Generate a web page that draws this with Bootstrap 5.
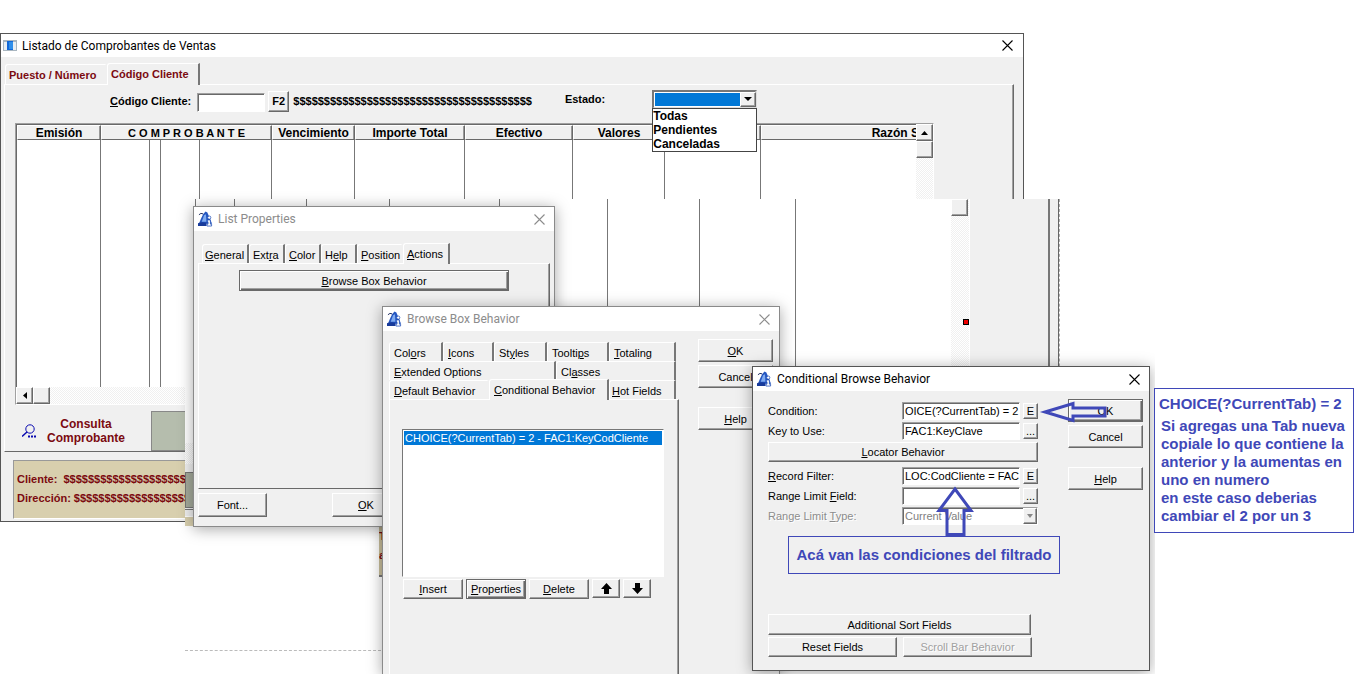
<!DOCTYPE html>
<html lang="es">
<head>
<meta charset="utf-8">
<meta name="viewport" content="width=device-width, initial-scale=1">
<title>Listado de Comprobantes de Ventas</title>
<link href="https://cdn.jsdelivr.net/npm/bootstrap@5.3.0/dist/css/bootstrap.min.css" rel="stylesheet">
<style>
:root{--face:#f0f0f0;--dark:#696969;--mid:#a0a0a0;--sel:#0078d7;--wine:#7b0a10;--ink:#3f48b8;--tan:#d8cfae}
body{font:11px/14px "Liberation Sans",Arial,sans-serif;color:#000;background:#fff}
.desk{position:relative;min-height:685px;overflow:hidden}
.win{position:absolute;background:var(--face);border:1px solid #8a8a8a}
.win-on{border-color:#555}
.win-shadow{box-shadow:0 2px 14px rgba(0,0,0,.35)}
.win-main{left:0;top:33px;width:1024px;height:489px;font-weight:700}
.win-list{left:193px;top:206px;width:362px;height:321px}
.win-box{left:382px;top:306px;width:398px;height:368px;border-bottom:0;clip-path:inset(-20px -20px 0 -20px)}
.win-cond{left:752px;top:366px;width:398px;height:305px;clip-path:inset(-20px -5px -3px -20px)}
.titlebar{display:flex;align-items:center;height:24px;background:#fff;padding:0 9px 0 4px;gap:5px;font:12px/16px Roboto,"Open Sans",sans-serif;color:#000}
.win-main .titlebar{height:23px;padding:0 10px 0 2px}
.titlebar.dim{color:#8c8c8c}
.titlebar h1,.titlebar h2{font:inherit;margin:0;flex:1;white-space:nowrap}
.titlebar button{border:0;background:none;padding:0;line-height:0;color:inherit}
.btn3d{font:inherit;color:#000;background:var(--face);border:1px solid;border-color:#fff var(--dark) var(--dark) #fff;box-shadow:inset -1px -1px var(--mid);border-radius:0;padding:0;display:inline-flex;align-items:center;justify-content:center;white-space:nowrap}
.btn3d.thick{border:1px solid var(--dark);box-shadow:inset 1px 1px #fff,inset -1px -1px var(--dark),inset -2px -2px var(--mid)}
.btn3d:disabled{color:#a0a0a0;text-shadow:1px 1px #fff;opacity:1;border-color:#fff var(--dark) var(--dark) #fff;background:var(--face)}
.sunk{font:inherit;color:#000;background:#fff;border:1px solid;border-color:var(--mid) #fff #fff var(--mid);box-shadow:inset 1px 1px var(--dark);border-radius:0;padding:0 0 0 2px;min-width:0;height:18px}
.page{border:1px solid;border-color:#fff var(--dark) var(--dark) #fff;box-shadow:inset -1px 0 var(--mid)}
.tabs3d{display:flex;align-items:flex-end}
.tabs3d button{font:inherit;color:inherit;text-align:left;white-space:nowrap;background:var(--face);border:0;border-top:1px solid #fff;border-left:1px solid #fff;border-right:2px solid #777;height:19px;padding:2px 0 0 4px;border-radius:3px 0 0 0}
.tabs3d button.flat{border-right-color:var(--face)}
.tabs3d button.cur{height:21px;padding-bottom:3px;margin-bottom:-1px;position:relative}
.hatch{background:repeating-conic-gradient(#f0f0f0 0 25%,#fff 0 50%) 0 0/2px 2px}

.main-tabs{padding:6px 0 0 4px;color:var(--wine)}
.main-tabs button{height:20px;line-height:14px;padding:1px 0 0 3px}
.main-tabs button.cur{height:22px}
.main-page{margin:0 9px 0 3px;height:368px}
.search{display:flex;align-items:center;height:38px;padding:0 0 6px 105px}
.code{width:68px;height:19px;margin:2px 3px 0 6px}
.state{display:flex;align-items:center;margin:0 0 4px 33px}
.combo{position:relative;width:105px;margin-left:47px;font-size:12px}
.combo select{display:block;width:100%;height:19px;appearance:none;color:#fff;background:linear-gradient(90deg,var(--sel) 85px,#fff 85px) no-repeat 1px 1px/86px 13px #fff;border:2px solid;border-color:#777 #ddd #ddd #777;border-radius:0;padding:0}
.combo .arrow{position:absolute;right:1px;top:2px;width:16px;height:15px;pointer-events:none}
.combo ul{position:absolute;left:0;top:18px;width:105px;margin:0;padding:0;list-style:none;background:#fff;border:1px solid #444;z-index:1}
.grid-frame{margin-left:10px;width:919px;height:282px;border:1px solid;border-color:var(--mid) #fff #fff var(--mid);background:#fff;display:flex;flex-direction:column}
.grid-view{flex:1;overflow:hidden;border-top:1px solid var(--dark);border-left:1px solid var(--dark)}
.grid-tab{table-layout:fixed;width:1040px;border-collapse:separate;border-spacing:0;height:100%}
.grid-tab th{height:15px;padding:0;text-align:center;font-size:12px;line-height:12px;white-space:nowrap;background:var(--face);border:1px solid;border-color:#fff var(--dark) var(--dark) #fff;box-shadow:inset -1px 0 #999}
.grid-tab th.spaced{font-size:11px}
.grid-tab td{padding:0;border-right:1px solid #777}
.vbar{width:17px}
.vbar .btn3d{width:17px;height:17px}
.query{height:46px;padding:6px 0 0 17px;color:var(--wine);display:flex}
.query button{border:0;background:none;font:inherit;font-size:12px;color:inherit;display:flex;align-items:center;padding:0;gap:10px;width:129px;height:40px}
.query span{width:80px}
.swatch{width:200px;background:#b5bdad;border:1px solid #888;border-right-color:#fff}
.client{margin:8px 0 0 12px;width:560px;height:59px;background:var(--tan);border:1px solid;border-color:#999 #fff #fff #999;padding:11px 0 0 3px;color:var(--wine)}
.client div{white-space:nowrap;margin-bottom:5px}

.back{position:absolute;left:185px;top:199px;width:970px;height:475px;background:#fff;overflow:hidden}
.back-row{display:flex;height:327px}
.back-list{flex:0 0 766px}
.back-cols{display:grid;grid-template-columns:11px 39px 72px 83px 110px 108px 92px 96px 1fr;height:244px}
.back-cols i{border-right:1px solid #777}
.back-cols i:last-child{border:0}
.slice{height:83px;width:9px;background:var(--face);display:flex;flex-direction:column}
.dash-h{border-top:1px dashed #bbb;width:196px;margin-top:124px}
.stub{position:absolute;left:379px;top:527px;width:3px;height:50px;overflow:hidden;background:#c9bf9c;color:var(--wine);font-weight:700;line-height:19px;border-bottom:2px solid #777}
.grip{position:absolute;left:963px;top:319px;width:6px;height:6px;background:#e00;border:1px solid #000}

.ok-col{display:flex;flex-direction:column;gap:3px;width:75px}
.ok-col .btn3d{height:23px}
.listbox{height:148px;background:#fff;border:1px solid;border-color:#777 #fff #fff #777;width:262px;padding:1px}
.listbox li{background:var(--sel);color:#fff;height:14px;line-height:14px;padding-left:1px}
.frow{display:flex;align-items:center;width:270px}
.frow label{flex:1}
.frow .sunk{width:118px;margin-right:3px}
.frow .btn3d{width:15px;height:16px}
.off{color:#8c8c8c;text-shadow:1px 1px #fff}
.typebox{position:relative;width:136px}
.typebox select.sunk{appearance:none;width:136px;color:#808080;opacity:1;margin:0}
.typebox .btn3d{position:absolute;right:1px;top:1px;width:14px}
.note{position:absolute;border:1px solid var(--ink);color:var(--ink);font-size:15px;line-height:18px;font-weight:700;white-space:nowrap}
.note-a{left:788px;top:536px;width:272px;height:38px;display:flex;align-items:center;justify-content:center}
.note-b{left:1154px;top:388px;width:200px;height:145px;background:#fff;padding:6px 0 0 6px;white-space:normal}
.note p{margin:0}
.pointer{position:absolute;overflow:visible}
</style>
</head>
<body>
<svg width="0" height="0" class="position-absolute" aria-hidden="true">
 <symbol id="sail" viewBox="0 0 16 16">
  <path d="M5.500 3 8 0 10 1 15 13H1L3.500 7z" fill="#2456c0"/>
  <path d="M6.500 4 8.500 3 9 11H4z" fill="#7fabef"/>
  <path d="M1 3.500Q3 1 5.500 2.500" fill="none" stroke="#17265a"/>
  <path d="M0 12.500Q4 10.500 9 12V15.500H0z" fill="#173a9a"/>
  <circle cx="12" cy="6.500" r="1.700" fill="#fff" stroke="#1d4cb4" stroke-width=".8"/>
  <path d="M10 9H13.200V13.500H14.500V15.500H9.500V13.500H10.700V11H10z" fill="#fff" stroke="#1d4cb4" stroke-width=".8"/>
 </symbol>
 <symbol id="cross" viewBox="0 0 11 11"><path d="M.5.5l10 10M10.500.5l-10 10" stroke="currentColor" stroke-width="1.100" fill="none"/></symbol>
</svg>
<main class="desk">
 <section class="win win-on win-main">
  <header class="titlebar">
   <svg width="14" height="11" viewBox="0 0 14 11"><path fill="#a9b6c0" d="M0 0h14v11H0z"/><path fill="#e8eef2" d="M1 2h12v8H1z"/><path fill="#1268d8" d="M4 1h6v9H4z"/><path fill="#2f8fea" d="M6 2h4v7H6z"/></svg>
   <h1>Listado de Comprobantes de Ventas</h1>
   <button type="button" aria-label="Cerrar"><svg width="11" height="11"><use href="#cross"/></svg></button>
  </header>
  <nav class="tabs3d main-tabs">
   <button type="button" class="flat" style="width:102px">Puesto / Número</button>
   <button type="button" class="cur" style="width:93px">Código Cliente</button>
  </nav>
  <div class="page main-page">
   <div class="search">
    <label for="cod"><u>C</u>ódigo Cliente:</label><input id="cod" class="sunk code">
    <button type="button" class="btn btn3d" style="width:21px;height:21px">F2</button>
    <span class="ms-1">$$$$$$$$$$$$$$$$$$$$$$$$$$$$$$$$$$$$$$$</span>
    <div class="state">
     <label for="estado">Estado:</label>
     <div class="combo">
      <select id="estado"><option value=""></option><option>Todas</option><option>Pendientes</option><option>Canceladas</option></select>
      <span class="btn3d arrow"><svg width="8" height="4"><path d="M0 0h8L4 4z"/></svg></span>
      <ul><li>Todas</li><li>Pendientes</li><li>Canceladas</li></ul>
     </div>
    </div>
   </div>
   <div class="grid-frame">
    <div class="d-flex flex-fill overflow-hidden">
     <div class="grid-view">
      <table class="grid-tab">
       <colgroup><col style="width:84px"><col style="width:49px"><col style="width:11px"><col style="width:39px"><col style="width:72px"><col style="width:83px"><col style="width:110px"><col style="width:108px"><col style="width:92px"><col style="width:96px"><col></colgroup>
       <thead><tr><th>Emisión</th><th colspan="4" class="spaced">C O M P R O B A N T E</th><th>Vencimiento</th><th>Importe Total</th><th>Efectivo</th><th>Valores</th><th></th><th>Razón Social</th></tr></thead>
       <tbody><tr><td></td><td></td><td></td><td></td><td></td><td></td><td></td><td></td><td></td><td></td><td></td></tr></tbody>
      </table>
     </div>
     <div class="vbar hatch">
      <button type="button" class="btn btn3d" aria-label="Subir"><svg width="7" height="4"><path d="M3.500 0 7 4H0z"/></svg></button>
      <button type="button" class="btn btn3d" aria-label="Posición"></button>
     </div>
    </div>
    <div class="hatch d-flex">
     <button type="button" class="btn btn3d" style="width:17px;height:17px" aria-label="Izquierda"><svg width="4" height="7"><path d="M4 0v7L0 3.500z"/></svg></button>
     <button type="button" class="btn btn3d" style="width:17px;height:17px" aria-label="Posición horizontal"></button>
    </div>
   </div>
   <div class="query">
    <button type="button">
     <svg width="14" height="14" fill="none" stroke="#0a0ab0"><circle cx="8" cy="5" r="4.200"/><path d="M5 8 0 12.500" stroke-width="1.500"/><path d="M6 12.500h2m1 0h2m1 0h2" stroke-width="2"/></svg>
     <span>Consulta Comprobante</span>
    </button>
    <div class="swatch"></div>
   </div>
  </div>
  <div class="client">
   <div>Cliente: &nbsp;$$$$$$$$$$$$$$$$$$$$</div>
   <div>Dirección: $$$$$$$$$$$$$$$$$$$</div>
  </div>
 </section>

 <div class="back">
  <div class="back-row">
   <div class="back-list">
    <div class="back-cols"><i></i><i></i><i></i><i></i><i></i><i></i><i></i><i></i><i></i></div>
    <div class="slice">
     <div class="hatch" style="height:21px"></div>
     <div style="height:44px;padding-top:8px"><div style="height:36px;background:#a5ab9c;border:1px solid #777"></div></div>
     <div style="height:8px;border-top:1px solid #777;border-bottom:1px solid #fff;margin-top:1px"></div>
     <div class="flex-fill" style="background:var(--tan)"></div>
    </div>
   </div>
   <div class="hatch" style="width:18px"><div class="btn3d d-block" style="width:17px;height:17px"></div></div>
   <div style="width:81px;background:var(--face);border-left:1px solid #fff;border-right:2px solid #777"></div>
   <div style="width:9px;background:var(--face);border-right:1px solid #666"></div>
   <div style="border-left:1px dashed #aaa"></div>
  </div>
  <div class="dash-h"></div>
 </div>
 <div class="stub">T<br>a</div>
 <div class="grip"></div>

 <section class="win win-list win-shadow">
  <header class="titlebar dim">
   <svg width="15" height="16"><use href="#sail"/></svg><h2>List Properties</h2>
   <button type="button" aria-label="Close"><svg width="11" height="11"><use href="#cross"/></svg></button>
  </header>
  <div class="px-1 pt-2">
   <nav class="tabs3d pt-1 mx-1">
    <button type="button" style="width:47px;padding-left:2px"><u>G</u>eneral</button>
    <button type="button" style="width:36px;padding-left:3px">Ext<u>r</u>a</button>
    <button type="button" style="width:36px;padding-left:3px"><u>C</u>olor</button>
    <button type="button" style="width:36px;padding-left:3px">H<u>e</u>lp</button>
    <button type="button" class="flat" style="width:46px;padding-left:3px"><u>P</u>osition</button>
    <button type="button" class="cur" style="width:47px;padding-left:3px"><u>A</u>ctions</button>
   </nav>
   <div class="page text-center mx-0" style="height:226px;padding-top:6px"><button type="button" class="btn btn3d thick" style="width:270px;height:21px"><u>B</u>rowse Box Behavior</button></div>
   <div class="d-flex pt-1"><button type="button" class="btn btn3d" style="width:69px;height:24px">Font...</button><button type="button" class="btn btn3d" style="width:68px;height:24px;margin-left:65px"><u>O</u>K</button></div>
  </div>
 </section>

 <section class="win win-box win-shadow">
  <header class="titlebar dim">
   <svg width="15" height="16"><use href="#sail"/></svg><h2>Browse Box Behavior</h2>
   <button type="button" aria-label="Close"><svg width="11" height="11"><use href="#cross"/></svg></button>
  </header>
  <div class="d-flex ps-1" style="height:343px;gap:19px">
   <div class="d-flex flex-column" style="width:292px;padding:11px 0 0 2px">
    <nav style="width:287px">
     <div class="tabs3d"><button type="button" style="width:54px">Col<u>o</u>rs</button><button type="button" style="width:51px"><u>I</u>cons</button><button type="button" style="width:53px">St<u>y</u>les</button><button type="button" style="width:62px">Toolti<u>p</u>s</button><button type="button" class="flex-fill"><u>T</u>otaling</button></div>
     <div class="tabs3d"><button type="button" style="width:167px"><u>E</u>xtended Options</button><button type="button" class="flex-fill">Cl<u>a</u>sses</button></div>
     <div class="tabs3d"><button type="button" class="flat" style="width:100px"><u>D</u>efault Behavior</button><button type="button" class="cur" style="width:120px;margin-top:-2px"><u>C</u>onditional Behavior</button><button type="button" class="flex-fill" style="padding-left:2px"><u>H</u>ot Fields</button></div>
    </nav>
    <div class="page flex-fill border-bottom-0" style="padding:29px 0 0 12px">
     <ul class="listbox list-unstyled mb-0"><li>CHOICE(?CurrentTab) = 2 - FAC1:KeyCodCliente</li></ul>
     <div class="d-flex" style="gap:3px;padding:2px 0 0 1px">
      <button type="button" class="btn btn3d" style="width:60px;height:20px"><u>I</u>nsert</button>
      <button type="button" class="btn btn3d thick" style="width:60px;height:20px"><u>P</u>roperties</button>
      <button type="button" class="btn btn3d" style="width:60px;height:20px"><u>D</u>elete</button>
      <button type="button" class="btn btn3d" style="width:28px;height:19px" aria-label="Up"><svg width="11" height="12"><path d="M5.500 0 11 6H8v5H3V6H0z"/></svg></button>
      <button type="button" class="btn btn3d" style="width:28px;height:19px" aria-label="Down"><svg width="11" height="12"><path d="M5.500 11 0 5h3V0h5v5h3z"/></svg></button>
     </div>
    </div>
   </div>
   <div class="ok-col" style="padding-top:8px">
    <button type="button" class="btn btn3d"><u>O</u>K</button><button type="button" class="btn btn3d">Cancel</button><button type="button" class="btn btn3d mt-3"><u>H</u>elp</button>
   </div>
  </div>
 </section>

 <section class="win win-on win-cond win-shadow">
  <header class="titlebar">
   <svg width="15" height="16"><use href="#sail"/></svg><h2>Conditional Browse Behavior</h2>
   <button type="button" aria-label="Close"><svg width="11" height="11"><use href="#cross"/></svg></button>
  </header>
  <form class="d-flex" style="padding:11px 0 0 15px;gap:30px">
   <div class="d-flex flex-column" style="gap:2px">
    <div class="frow"><label for="c1">Condition:</label><input id="c1" class="sunk" value="OICE(?CurrentTab) = 2"><button type="button" class="btn btn3d">E</button></div>
    <div class="frow"><label for="c2">Key to Use:</label><input id="c2" class="sunk" value="FAC1:KeyClave"><button type="button" class="btn btn3d">...</button></div>
    <button type="button" class="btn btn3d" style="height:20px;margin-bottom:3px"><u>L</u>ocator Behavior</button>
    <div class="frow"><label for="c3"><u>R</u>ecord Filter:</label><input id="c3" class="sunk" value="LOC:CodCliente = FAC"><button type="button" class="btn btn3d">E</button></div>
    <div class="frow"><label for="c4">Range Limit <u>F</u>ield:</label><input id="c4" class="sunk"><button type="button" class="btn btn3d">...</button></div>
    <div class="frow"><label for="c5" class="off">Range Limit <u>T</u>ype:</label><div class="typebox"><select id="c5" class="sunk" disabled><option>Current Value</option></select><span class="btn3d"><svg width="6" height="4" fill="#888"><path d="M0 0h6L3 4z"/></svg></span></div></div>
    <button type="button" class="btn btn3d" style="width:263px;height:21px;margin-top:87px">Additional Sort Fields</button>
    <div class="d-flex" style="gap:6px"><button type="button" class="btn btn3d" style="width:129px;height:20px">Reset Fields</button><button type="button" class="btn btn3d" style="width:129px;height:20px" disabled>Scroll Bar Behavior</button></div>
   </div>
   <div class="ok-col" style="margin-top:-3px">
    <button type="button" class="btn btn3d thick"><u>O</u>K</button><button type="button" class="btn btn3d">Cancel</button><button type="button" class="btn btn3d mt-3"><u>H</u>elp</button>
   </div>
  </form>
 </section>

 <svg class="pointer" style="left:1043px;top:402px" width="64" height="20" fill="none" stroke="#3f48b8" stroke-width="3"><path d="M2 10 30 1.500V6H62V14H30V18.500z"/></svg>
 <svg class="pointer" style="left:937px;top:487px" width="38" height="49" fill="none" stroke="#3f48b8" stroke-width="3"><path d="M18 2 34 23.500H27V47.500H10V23.500H2z"/></svg>
 <p class="note note-a mb-0">Acá van las condiciones del filtrado</p>
 <aside class="note note-b"><p class="mb-1 text-nowrap" style="margin-left:-2px">CHOICE(?CurrentTab) = 2</p><p>Si agregas una Tab nueva<br>copiale lo que contiene la<br>anterior y la aumentas en<br>uno en numero<br>en este caso deberias<br>cambiar el 2 por un 3</p></aside>
</main>
<script src="https://cdn.jsdelivr.net/npm/bootstrap@5.3.0/dist/js/bootstrap.bundle.min.js"></script>
</body>
</html>
